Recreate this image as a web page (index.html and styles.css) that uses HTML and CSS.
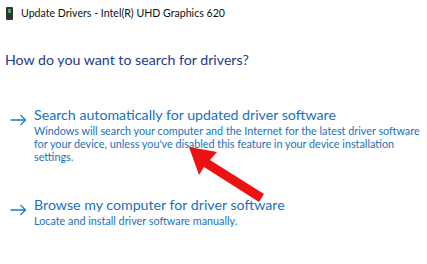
FILE: index.html
```html
<!DOCTYPE html>
<html>
<head>
<meta charset="utf-8">
<link rel="stylesheet" href="styles.css">
</head>
<body>
<div class="window">
  <div class="titlebar">
    <span class="devicon"><span class="screen"></span></span>
    <span class="title">Update Drivers - Intel(R) UHD Graphics 620</span>
  </div>
  <h1 class="heading">How do you want to search for drivers?</h1>
  <div class="option opt1">
    <span class="arrow">
      <svg width="17" height="12" viewBox="0 0 17 12"><path d="M0.5 6H15.5M10.5 1L15.5 6L10.5 11" fill="none" stroke="#1a7bd0" stroke-width="1.3"/></svg>
    </span>
    <div class="text">
      <div class="otitle">Search automatically for updated driver software</div>
      <div class="odesc">Windows will search your computer and the Internet for the latest driver software for your device, unless you've disabled this feature in your device installation settings.</div>
    </div>
  </div>
  <div class="option opt2">
    <span class="arrow">
      <svg width="17" height="12" viewBox="0 0 17 12"><path d="M0.5 6H15.5M10.5 1L15.5 6L10.5 11" fill="none" stroke="#1a7bd0" stroke-width="1.3"/></svg>
    </span>
    <div class="text">
      <div class="otitle">Browse my computer for driver software</div>
      <div class="odesc">Locate and install driver software manually.</div>
    </div>
  </div>
  <svg class="pointer" width="427" height="264" viewBox="0 0 427 264">
    <polygon points="189,147 217,152 210,160 264,194 259,202 204,167 199,175" fill="#ee1111"/>
  </svg>
</div>
</body>
</html>
```
FILE: styles.css
```css
html, body { margin: 0; padding: 0; background: #fff; }
body { font-family: "Lato", "Noto Sans", sans-serif; width: 427px; height: 264px; overflow: hidden; }
.window { position: relative; width: 427px; height: 264px; }
.titlebar { display: flex; align-items: center; height: 26px; padding-left: 6px; }
.devicon { width: 7px; height: 13px; background: #333; border-radius: 1px; display: flex; justify-content: center; padding-top: 2px; box-sizing: border-box; margin-right: 8px; }
.screen { width: 3px; height: 4px; background: #3fae5a; }
.title { font-size: 10.6px; color: #111; }
.heading { margin: 24px 0 0 5px; font-size: 14.2px; font-weight: normal; color: #1c3a8c; line-height: 20px; }
.option { display: flex; padding-left: 10px; }
.opt1 { margin-top: 36px; }
.opt2 { margin-top: 33px; }
.arrow { width: 24px; padding-top: 4px; }
.text { flex: 1; padding-right: 6px; }
.otitle { font-size: 14.2px; color: #1a70c0; line-height: 18px; }
.odesc { font-size: 10.8px; color: #1a70c0; line-height: 13px; margin-top: 0; }
.pointer { position: absolute; left: 0; top: 0; pointer-events: none; }
```
